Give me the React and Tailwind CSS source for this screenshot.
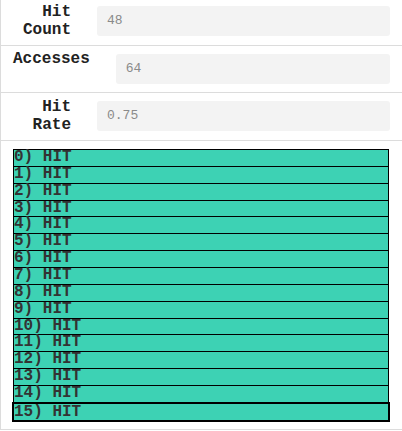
import React from "react";

function Field({ label, value, rowClass, labelClass, inputClass }) {
  return (
    <div className={`flex items-start border-b border-[#dcdcdc] pl-3 pr-3 ${rowClass}`}>
      <div
        className={`shrink-0 grow-0 basis-[58px] text-right font-['Liberation_Mono',monospace] text-[16px] font-bold leading-[18.13px] text-[#222] ${labelClass}`}
      >
        {label}
      </div>
      <div
        className={`ml-[26px] flex h-[30px] flex-1 items-center rounded-[3px] bg-[#f3f3f3] pl-[10px] font-['Liberation_Mono',monospace] text-[13px] text-[#8a8a8a] ${inputClass}`}
      >
        {value}
      </div>
    </div>
  );
}

export default function App() {
  const rows = Array.from({ length: 16 }, (_, i) => i);
  return (
    <div className="w-[402px] border-b border-l border-[#dcdcdc] bg-white">
      <Field label="Hit Count" value="48" rowClass="h-[46px]" labelClass="mt-[3px]" inputClass="mt-[6px]" />
      <Field label="Accesses" value="64" rowClass="h-[47px]" labelClass="mt-[4px]" inputClass="mt-[8px]" />
      <Field label="Hit Rate" value="0.75" rowClass="h-[48px]" labelClass="mt-[5px]" inputClass="mt-[8px]" />
      <div className="pb-[7px] pl-3 pr-[13px] pt-2">
        {rows.map((i) =>
          i < 15 ? (
            <div
              key={i}
              className="h-[16.87px] border-x border-t border-black bg-[#3dd2b4] font-['Liberation_Mono',monospace] text-[16px] font-bold leading-[15.87px] text-[#333]"
            >
              {i}) HIT
            </div>
          ) : (
            <div
              key={i}
              className="-mx-px h-[20px] border-2 border-black bg-[#3dd2b4] font-['Liberation_Mono',monospace] text-[16px] font-bold leading-[16px] text-[#333]"
            >
              {i}) HIT
            </div>
          )
        )}
      </div>
    </div>
  );
}
